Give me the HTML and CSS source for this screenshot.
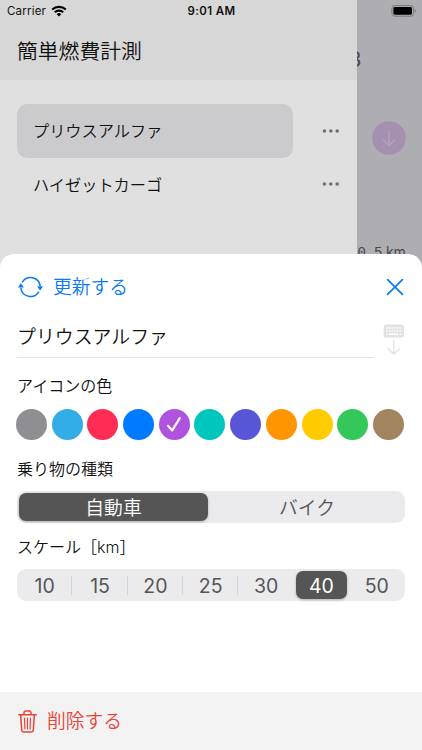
FILE: index.html
```html
<!DOCTYPE html>
<html lang="ja">
<head>
<meta charset="utf-8">
<title>簡単燃費計測</title>
<link rel="stylesheet" href="styles.css">
</head>
<body>
<div class="screen">
  <div class="backdrop">
    <aside class="drawer">
      <header class="drawer-head"><h1>簡単燃費計測</h1></header>
      <ul class="vehicles">
        <li><span class="vehicle selected">プリウスアルファ</span><svg class="more" width="18" height="4" viewBox="0 0 18 4"><circle cx="2.4" cy="2" r="1.8"/><circle cx="8.8" cy="2" r="1.8"/><circle cx="15.2" cy="2" r="1.8"/></svg></li>
        <li><span class="vehicle">ハイゼットカーゴ</span><svg class="more" width="18" height="4" viewBox="0 0 18 4"><circle cx="2.4" cy="2" r="1.8"/><circle cx="8.8" cy="2" r="1.8"/><circle cx="15.2" cy="2" r="1.8"/></svg></li>
      </ul>
    </aside>
    <main class="behind">
      <span class="count">3</span>
      <svg class="down" width="34" height="34" viewBox="0 0 34 34"><circle cx="17" cy="17" r="16.8" fill="#a590b1"/><path d="M17 9.5V24.5M11.2 19L17 24.5L22.8 19" fill="none" stroke="#b3a2bc" stroke-width="1.3" stroke-linecap="round" stroke-linejoin="round"/></svg>
      <span class="distance"><span>0.5</span> km</span>
    </main>
  </div>

  <div class="status">
    <div class="carrier">Carrier
      <svg width="16" height="12" viewBox="0 0 16 12"><g fill="none" stroke="#000" stroke-width="2.1"><path d="M1.2 4.6A9.8 9.8 0 0 1 14.8 4.6"/><path d="M3.8 7.3A6 6 0 0 1 12.2 7.3"/></g><path d="M5.7 9.2A3.3 3.3 0 0 1 10.3 9.2L8 11.5Z"/></svg>
    </div>
    <time>9:01 AM</time>
    <svg class="battery" width="26" height="12" viewBox="0 0 26 12"><rect x=".9" y=".6" width="21.6" height="10.6" rx="2.8" fill="none" stroke="#77777a"/><rect x="2.4" y="2.1" width="18.6" height="7.6" rx="1.4"/><path d="M23.8 4.2Q25.2 5 25.2 6T23.8 7.8Z" fill="#77777a"/></svg>
  </div>

  <section class="sheet">
    <div class="sheet-head">
      <button class="action update">
        <svg width="26" height="22" viewBox="0 0 26 22"><g fill="none" stroke="currentColor" stroke-width="1.6"><path d="M4.2 6.4A9.6 9.6 0 0 1 22.1 10"/><path d="M20.8 15.6A9.6 9.6 0 0 1 2.9 12"/></g><path fill="currentColor" d="M0 11.6L2.9 7L5.8 11.6ZM19.2 10.2H25L22.1 14.8Z"/></svg>
        更新する
      </button>
      <svg class="close" width="18" height="18" viewBox="0 0 18 18"><path d="M1.6 1.6L16.4 16.4M16.4 1.6L1.6 16.4" fill="none" stroke="#087bf5" stroke-width="1.7" stroke-linecap="round"/></svg>
    </div>

    <div class="name-row">
      <div class="name-field">プリウスアルファ</div>
      <svg class="keyboard" width="22" height="32" viewBox="0 0 22 32"><rect x=".7" y=".6" width="20.2" height="13" rx="2.2" fill="#e2e2e4"/><path d="M3.3 4.1H18.6M3.3 7.1H18.6" stroke="#fff" stroke-width="1.5" stroke-dasharray="1.6 1"/><path d="M3.3 10.2H4.9M6 10.2H15.6M16.8 10.2H18.4" stroke="#fff" stroke-width="1.5"/><path d="M10.8 16.2V30M5.1 24.8L10.8 30L16.5 24.8" fill="none" stroke="#e2e2e4" stroke-width="1.4" stroke-linecap="round" stroke-linejoin="round"/></svg>
    </div>

    <h2 class="label color-label">アイコンの色</h2>
    <div class="colors">
      <i class="gray"></i><i class="sky"></i><i class="red"></i><i class="blue"></i><i class="purple"><svg width="16" height="17" viewBox="0 0 16 17"><path d="M2 9.8L6.2 14.4L13.8 2.2" fill="none" stroke="#fff" stroke-width="2.2" stroke-linecap="round" stroke-linejoin="round"/></svg></i><i class="teal"></i><i class="indigo"></i><i class="orange"></i><i class="yellow"></i><i class="green"></i><i class="brown"></i>
    </div>

    <h2 class="label type-label">乗り物の種類</h2>
    <div class="segments types"><span class="on">自動車</span><span>バイク</span></div>

    <h2 class="label scale-label">スケール［km］</h2>
    <div class="segments scales"><span>10</span><span>15</span><span>20</span><span>25</span><span>30</span><span class="on">40</span><span>50</span></div>

    <footer class="sheet-foot">
      <button class="action delete">
        <svg width="20" height="23" viewBox="0 0 20 23"><g fill="none" stroke="currentColor" stroke-width="1.5" stroke-linecap="round" stroke-linejoin="round"><path d="M.8 4.8H18.2M2.6 4.8L3.7 20Q3.9 22 5.8 22H13.2Q15.1 22 15.3 20L16.4 4.8M6 4.5V2.7Q6 1 7.7 1H11.3Q13 1 13 2.7V4.5"/><path stroke-width="1.2" d="M6.5 8L6.9 18.8M9.5 8V18.8M12.5 8L12.1 18.8"/></g></svg>
        削除する
      </button>
    </footer>
  </section>
</div>
</body>
</html>
```

FILE: styles.css
```css
* { box-sizing: border-box; }
body { margin: 0; font-family: Inter, "Noto Sans CJK JP", sans-serif; color: #111; }
h1, h2, ul { margin: 0; padding: 0; font-weight: 350; list-style: none; }
button { border: 0; padding: 0; background: none; font: inherit; }
svg { display: block; flex: none; }
.screen { position: relative; width: 422px; height: 750px; overflow: hidden; background: #aeadb2; }
.backdrop { display: flex; height: 290px; }

.drawer { width: 356.5px; flex: none; background: #e0e0e0; }
.drawer-head { height: 80px; padding: 37px 17px 0; background: #d7d7d7; }
.drawer-head h1 { font-size: 20.8px; line-height: 30px; }
.vehicles { padding: 24px 16.5px 0; }
.vehicles li { display: flex; align-items: center; justify-content: space-between; height: 53.5px; }
.vehicle { width: 276.5px; height: 53.5px; padding-left: 16.5px; border-radius: 10px; font-size: 16.2px; line-height: 54px; font-weight: 350; }
.vehicle.selected { background: #cbcbcd; }
.more { fill: #707072; }

.behind { display: flex; flex-direction: column; flex: 1; overflow: hidden; color: #49494d; }
.count { height: 30px; margin: 45px 0 0 -8px; font-size: 21px; line-height: 30px; font-weight: 400; }
.down { margin: 46px 0 0 15px; }
.distance { margin: 87px 0 0 1px; font-size: 14px; line-height: 20px; white-space: nowrap; letter-spacing: -.15px; }
.distance span { font-family: "Liberation Mono", monospace; }

.status { position: absolute; inset: 0 0 auto; display: grid; grid-template-columns: 1fr auto 1fr; align-items: center; height: 22px; padding: 0 5px 0 7px; font-size: 11.5px; color: #111; }
.carrier { display: flex; align-items: center; gap: 5px; letter-spacing: .2px; }
.status time { margin-left: -1px; font-weight: 600; letter-spacing: .4px; }
.battery { justify-self: end; }

.sheet { position: absolute; inset: 254px 0 0; display: flex; flex-direction: column; border-radius: 14px 14px 0 0; background: #fff; overflow: hidden; }
.action { display: flex; align-items: center; font-size: 18.8px; line-height: 28px; font-weight: 350; }
.sheet-head { display: flex; align-items: center; justify-content: space-between; height: 66px; padding: 2px 18px 0; }
.close { margin-top: -2px; }
.update { gap: 9px; color: #087bf5; }
.update svg { margin-top: -2px; }
.name-row { display: flex; height: 38px; padding: 0 17.5px 0 17px; justify-content: space-between; }
.name-field { width: 356.5px; height: 38px; border-bottom: 1px solid #e4e4e6; font-size: 18.9px; line-height: 36px; font-weight: 350; }
.keyboard { margin-top: 4px; }
.label { padding-left: 17px; font-size: 16px; line-height: 24px; }
.color-label { margin-top: 16px; }
.colors { display: flex; justify-content: space-between; margin: 11px 18px 0 16px; }
.colors i { display: grid; place-items: center; width: 31px; height: 31px; border-radius: 50%; }
.gray { background: #8e8e93; }
.sky { background: #32ade6; }
.red { background: #ff2d55; }
.blue { background: #007aff; }
.purple { background: #af52de; }
.teal { background: #00c7be; }
.indigo { background: #5856d6; }
.orange { background: #ff9500; }
.yellow { background: #ffcc00; }
.green { background: #34c759; }
.brown { background: #a2845e; }
.type-label { margin-top: 17px; }
.segments { display: grid; margin: 10px 17px 0; height: 32px; padding: 2px; border-radius: 9px; background: #ebebed; color: #555; }
.segments span { display: flex; align-items: center; justify-content: center; border-radius: 7px; }
.segments .on { background: #555; color: #fff; box-shadow: 0 1px 3px rgba(0, 0, 0, .25); }
.types { grid-template-columns: 189px 1fr; font-size: 18.8px; line-height: 24px; font-weight: 350; }
.types span { padding-top: 4px; }
.types span + span { padding-left: 3px; }
.scale-label { margin-top: 12px; }
.scales { grid-template-columns: repeat(7, 1fr); column-gap: 4px; margin-right: 17.5px; font-size: 19.5px; font-weight: 400; }
.scales span { position: relative; padding-top: 1px; }
.scales .on { margin: 0 .5px; }
.scales span:nth-child(-n+4)::after { content: ""; position: absolute; right: -2px; top: 5px; width: 1px; height: 19px; background: #d5d5d8; }
.sheet-foot { margin-top: auto; height: 58px; padding: 16px 18px; background: #f3f3f3; }
.delete { gap: 9px; color: #ed4238; }
.delete svg { margin-top: -2px; }
```
